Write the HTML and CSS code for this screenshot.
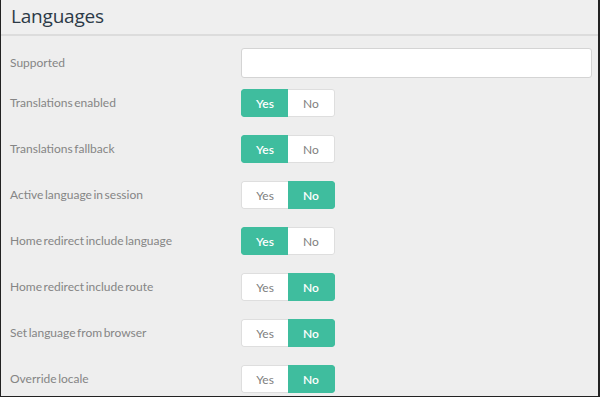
FILE: index.html
```html
<!DOCTYPE html>
<html lang="en">
<head>
    <meta charset="UTF-8">
    <title>Languages</title>
    <link rel="stylesheet" href="styles.css">
</head>
<body>
<div class="frame">
    <!-- Panel header -->
    <div class="panel-head">
        <h2>Languages</h2>
    </div>

    <!-- Settings form -->
    <form class="settings">
        <div class="row row-input">
            <label>Supported</label>
            <input type="text" class="text-field">
        </div>

        <div class="row">
            <label>Translations enabled</label>
            <div class="toggle"><span class="opt on">Yes</span><span class="opt">No</span></div>
        </div>

        <div class="row">
            <label>Translations fallback</label>
            <div class="toggle"><span class="opt on">Yes</span><span class="opt">No</span></div>
        </div>

        <div class="row">
            <label>Active language in session</label>
            <div class="toggle"><span class="opt">Yes</span><span class="opt on">No</span></div>
        </div>

        <div class="row">
            <label>Home redirect include language</label>
            <div class="toggle"><span class="opt on">Yes</span><span class="opt">No</span></div>
        </div>

        <div class="row">
            <label>Home redirect include route</label>
            <div class="toggle"><span class="opt">Yes</span><span class="opt on">No</span></div>
        </div>

        <div class="row">
            <label>Set language from browser</label>
            <div class="toggle"><span class="opt">Yes</span><span class="opt on">No</span></div>
        </div>

        <div class="row">
            <label>Override locale</label>
            <div class="toggle"><span class="opt">Yes</span><span class="opt on">No</span></div>
        </div>
    </form>
</div>
</body>
</html>
```

FILE: styles.css
```css
/* General Page Styles */
html, body {
    margin: 0;
    padding: 0;
}

body {
    font-family: 'Lato', 'Open Sans', sans-serif;
    background: #ffffff;
    color: #777;
}

.frame {
    box-sizing: border-box;
    width: 600px;
    height: 397px;
    overflow: hidden;
    background: #eeeeee;
    border-left: 1px solid #222;
    border-right: 2px solid #222;
    border-bottom: 1px solid #222;
}

/* Header */
.panel-head {
    height: 34px;
    background: #efefef;
    border-bottom: 2px solid #dcdcdc;
    padding-left: 10px;
}

.panel-head h2 {
    margin: 0;
    padding-top: 3px;
    font-family: 'Open Sans', sans-serif;
    font-size: 19px;
    font-weight: 400;
    color: #2c3a47;
    letter-spacing: -0.2px;
}

/* Rows */
.settings {
    display: flex;
    flex-direction: column;
    padding: 12px 6px 0 9px;
}

.row {
    display: flex;
    align-items: center;
    height: 28px;
    margin-bottom: 18px;
}

.row-input {
    height: 30px;
    margin-bottom: 11px;
}

.row label {
    width: 231px;
    font-size: 12px;
    color: #858585;
    word-spacing: -1.5px;
    margin-top: -2px;
}

.text-field {
    box-sizing: border-box;
    flex: 1;
    height: 30px;
    border: 1px solid #d4d4d4;
    border-radius: 3px;
    background: #ffffff;
    outline: none;
}

/* Yes / No switch */
.toggle {
    display: flex;
    height: 28px;
    border-radius: 3px;
    overflow: hidden;
}

.opt {
    box-sizing: border-box;
    width: 47px;
    display: flex;
    align-items: center;
    justify-content: center;
    font-size: 12px;
    color: #808080;
    background: #ffffff;
    border: 1px solid #dedede;
}

.opt:first-child {
    border-right: none;
    border-radius: 3px 0 0 3px;
}

.opt:last-child {
    border-left: none;
    border-radius: 0 3px 3px 0;
}

.opt.on {
    background: #3fbd9e;
    border-color: #3fbd9e;
    color: #ffffff;
    font-weight: 600;
}
```
